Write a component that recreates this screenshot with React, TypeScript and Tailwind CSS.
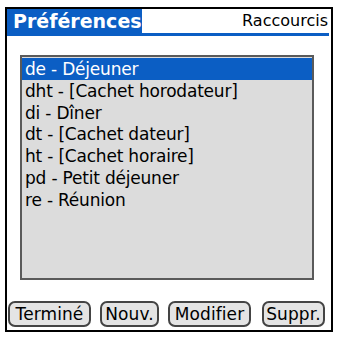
import React from "react";

const ITEMS = [
  "de - Déjeuner",
  "dht - [Cachet horodateur]",
  "di - Dîner",
  "dt - [Cachet dateur]",
  "ht - [Cachet horaire]",
  "pd - Petit déjeuner",
  "re - Réunion",
];

const BUTTONS = [
  { label: "Terminé", w: "w-[83px]" },
  { label: "Nouv.", w: "w-[59px]" },
  { label: "Modifier", w: "w-[83px]" },
  { label: "Suppr.", w: "w-[63px]" },
];

export default function App() {
  return (
    <div className="w-[337px] h-[337px] bg-white pt-[7px] pl-[5px]" style={{ fontFamily: '"DejaVu Sans", sans-serif' }}>
      <div className="w-[328px] h-[325px] border-2 border-black flex flex-col">
        <div className="flex items-end h-[27px] border-b-[3px] border-[#0b5ec4] mr-[2px]">
          <div className="h-full w-[135px] bg-[#0b5ec4] text-white font-bold text-[19px] leading-[24px] pl-[6px]">
            Préférences
          </div>
          <div className="flex-1 text-right text-[16px] leading-[24px] text-black pr-[1px]">Raccourcis</div>
        </div>
        <div className="ml-[13px] mt-[19px] w-[294px] h-[225px] border-2 border-[#5a5a5a] bg-[#dcdcdc] pt-px">
          {ITEMS.map((t, i) => (
            <div
              key={t}
              className={`h-[21.8px] pl-[3px] text-[17px] leading-[22px] tracking-[-0.2px] whitespace-nowrap ${
                i === 0 ? "bg-[#0b5ec4] text-white" : "text-black"
              }`}
            >
              {t}
            </div>
          ))}
        </div>
        <div className="flex items-center ml-px mt-[21px]">
          {BUTTONS.map((b, i) => (
            <div
              key={b.label}
              className={`${b.w} ${i === 3 ? "ml-[11px]" : i > 0 ? "ml-[9px]" : ""} h-[26px] border-2 border-[#444] rounded-[7px] bg-[#e4e4e4] text-[17px] leading-[22px] tracking-[0.1px] text-black text-center whitespace-nowrap`}
            >
              {b.label}
            </div>
          ))}
        </div>
      </div>
    </div>
  );
}
